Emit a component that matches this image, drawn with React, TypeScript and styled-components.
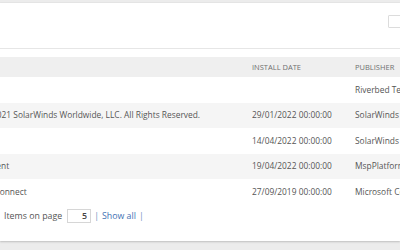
import React from "react";
import styled, { createGlobalStyle } from "styled-components";

const GlobalStyle = createGlobalStyle`
  html, body {
    margin: 0;
    padding: 0;
    background: #ececec;
    overflow: hidden;
  }
  body {
    font-family: "Open Sans", "Liberation Sans", sans-serif;
    color: #555;
  }
`;

const Page = styled.div`
  width: 400px;
  height: 250px;
  padding-top: 3px;
  box-sizing: border-box;
`;

const Panel = styled.section`
  background: #fff;
  height: 238px;
  box-shadow: 0 1px 2px rgba(0, 0, 0, 0.18), 0 0 1px rgba(0, 0, 0, 0.12);
  display: flex;
  flex-direction: column;
  overflow: hidden;
`;

const Toolbar = styled.div`
  height: 45px;
  flex: none;
  display: flex;
  justify-content: flex-end;
  align-items: flex-start;
  border-bottom: 1px solid #e6e6e6;
`;

const Search = styled.input`
  margin-top: 12px;
  margin-right: -18px;
  width: 30px;
  height: 13px;
  box-sizing: border-box;
  border: 1px solid #dcdcdc;
  border-radius: 1px;
  background: #fff;
  padding: 0;
  outline: none;
`;

const Viewport = styled.div`
  margin-top: 8px;
  overflow: hidden;
  flex: none;
`;

/* table is scrolled horizontally; the first columns sit left of the view */
const Grid = styled.div`
  margin-left: -167px;
  width: max-content;
`;

const Row = styled.div<{ $shade?: boolean; $head?: boolean }>`
  display: grid;
  grid-template-columns: 128px 291px 103px 150px;
  align-items: center;
  height: ${(p) => (p.$head ? "20px" : "25.5px")};
  background: ${(p) => (p.$head ? "#efefef" : p.$shade ? "#f5f5f5" : "#fff")};
`;

const Cell = styled.div`
  padding-right: 10px;
  font-size: 8.4px;
  line-height: 12px;
  white-space: nowrap;
  overflow: hidden;
  color: #555;
`;

const HeadCell = styled(Cell)`
  font-size: 7.5px;
  text-transform: uppercase;
  color: #707070;
`;

const Pager = styled.div`
  display: flex;
  align-items: center;
  gap: 3px;
  padding: 4px 0 0 4px;
  font-size: 8.8px;
  color: #555;
`;

const PageSize = styled.input`
  width: 24px;
  height: 14px;
  box-sizing: border-box;
  margin: 0 0 0 2px;
  border: 1px solid #d6d6d6;
  padding: 0 3px 0 0;
  text-align: right;
  font: inherit;
  font-size: 8.8px;
  font-weight: 600;
  color: #444;
  outline: none;
`;

const Sep = styled.span`
  color: #6a8fc0;
`;

const Link = styled.a`
  color: #3f72b4;
  text-decoration: none;
`;

type Program = {
  name: string;
  details: string;
  installed: string;
  publisher: string;
};

const programs: Program[] = [
  { name: "Riverbed Client", details: "", installed: "", publisher: "Riverbed Technology" },
  {
    name: "Windows Agent",
    details: "© 1999-2021 SolarWinds Worldwide, LLC. All Rights Reserved.",
    installed: "29/01/2022 00:00:00",
    publisher: "SolarWinds MSP",
  },
  { name: "Patch Management", details: "", installed: "14/04/2022 00:00:00", publisher: "SolarWinds MSP" },
  { name: "Request Handler", details: "Probe Agent", installed: "19/04/2022 00:00:00", publisher: "MspPlatform" },
  { name: "Outlook Add-in", details: "Outlook Connect", installed: "27/09/2019 00:00:00", publisher: "Microsoft Corporation" },
];

export default function App() {
  return (
    <Page>
      <GlobalStyle />
      <Panel>
        <Toolbar>
          <Search aria-label="Search" />
        </Toolbar>
        <Viewport>
          <Grid>
            <Row $head>
              <HeadCell>Name</HeadCell>
              <HeadCell>Details</HeadCell>
              <HeadCell>Install date</HeadCell>
              <HeadCell>Publisher</HeadCell>
            </Row>
            {programs.map((p, i) => (
              <Row key={p.name} $shade={i % 2 === 1}>
                <Cell>{p.name}</Cell>
                <Cell>{p.details}</Cell>
                <Cell>{p.installed}</Cell>
                <Cell>{p.publisher}</Cell>
              </Row>
            ))}
          </Grid>
        </Viewport>
        <Pager>
          <span>Items on page</span>
          <PageSize defaultValue="5" aria-label="Items on page" />
          <Sep>|</Sep>
          <Link href="#">Show all</Link>
          <Sep>|</Sep>
        </Pager>
      </Panel>
    </Page>
  );
}
